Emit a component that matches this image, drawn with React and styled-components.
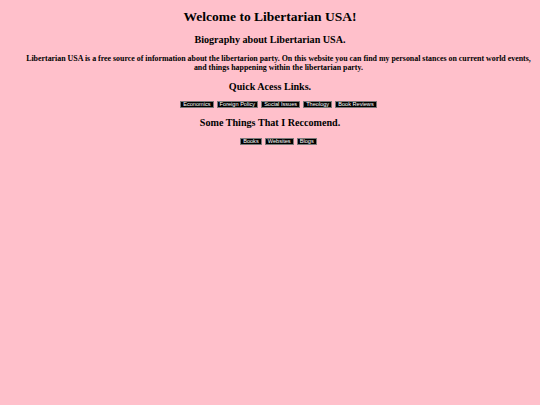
import React from "react"
import styled, { createGlobalStyle } from "styled-components"

const GlobalStyle = createGlobalStyle`
  html {
    background: pink;
  }
  body {
    margin: 0 3.4px;
    background: pink;
    font-family: "Liberation Serif", "Times New Roman", serif;
    color: #000;
  }
`

const Page = styled.main`
  display: block;
  text-align: center;
`

const Title = styled.h1`
  font-size: 13.5px;
  font-weight: bold;
  margin: 8.6px 0 9.6px;
`

const Heading = styled.h2`
  font-size: 10.125px;
  font-weight: bold;
  margin: 9px 0 8.6px;
`

const Intro = styled.h3`
  font-size: 7.9px;
  font-weight: bold;
  margin: 8px 0;
  padding-left: 16.9px;
`

const LinkRow = styled.div`
  font-size: 6.75px;
  line-height: 7px;
  padding-left: 16.9px;
`

const LinkButton = styled.button`
  font-family: "Liberation Sans", Arial, sans-serif;
  font-size: 5.6px;
  line-height: 5px;
  vertical-align: middle;
  color: #fff;
  background: #000;
  border: 1px solid #7a7a7a;
  padding: 0 2.1px;
  margin: 0 0.6px;
  cursor: pointer;
`

const quickLinks = [
  "Economics",
  "Foreign Policy",
  "Social Issues",
  "Theology",
  "Book Reviews",
]

const recommended = ["Books", "Websites", "Blogs"]

const App = () => {
  return (
    <Page>
      <GlobalStyle />
      <Title>Welcome to Libertarian USA!</Title>
      <Heading>Biography about Libertarian USA.</Heading>
      <Intro>
        Libertarian USA is a free source of information about the libertarion
        party. On this website you can find my personal stances on current
        world events, and things happening within the libertarian party.
      </Intro>
      <Heading>Quick Acess Links.</Heading>
      <LinkRow>
        {quickLinks.map((label) => (
          <React.Fragment key={label}>
            <LinkButton>{label}</LinkButton>{" "}
          </React.Fragment>
        ))}
      </LinkRow>
      <Heading>Some Things That I Reccomend.</Heading>
      <LinkRow>
        {recommended.map((label) => (
          <React.Fragment key={label}>
            <LinkButton>{label}</LinkButton>{" "}
          </React.Fragment>
        ))}
      </LinkRow>
    </Page>
  )
}

export default App
